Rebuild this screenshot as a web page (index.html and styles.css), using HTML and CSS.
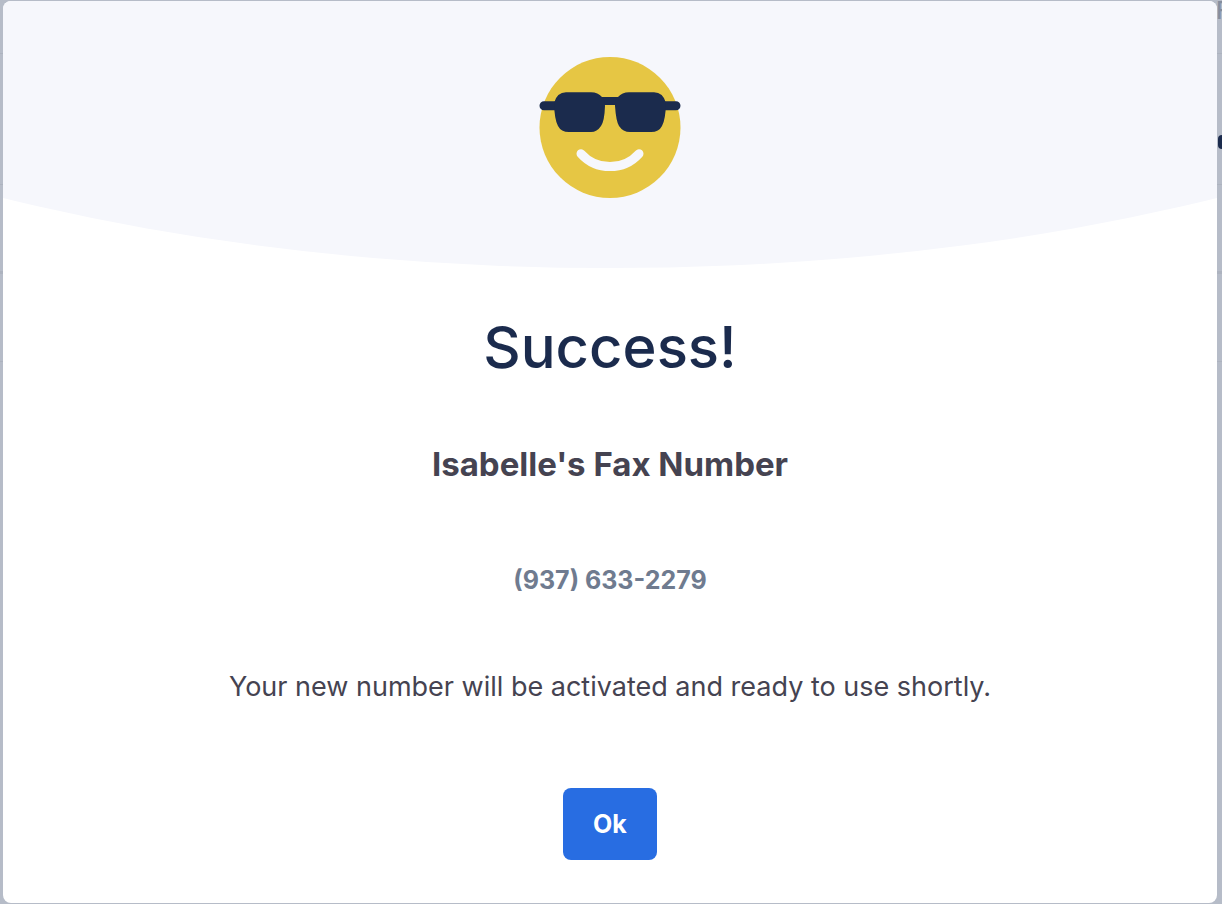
FILE: index.html
```html
<!DOCTYPE html>
<html lang="en">
<head>
    <meta charset="UTF-8">
    <meta name="viewport" content="width=device-width, initial-scale=1.0">
    <title>Success</title>
    <link rel="stylesheet" href="styles.css">
</head>
<body>
    <div class="page" aria-hidden="true">
        <div class="row row-title"><span>F</span></div>
        <div class="row row-status"><span class="dot"></span></div>
        <div class="row row-short"></div>
        <div class="row row-item"></div>
        <div class="row row-rest"></div>
    </div>
    <div class="modal" role="dialog" aria-modal="true" aria-labelledby="modalTitle">
        <div class="modal-header">
            <svg class="smiley" viewBox="0 0 142 142" role="img" aria-label="Smiling face with sunglasses">
                <circle cx="71" cy="70.5" r="70.5" fill="#e6c644"/>
                <path d="M42 96.700A39 39 0 0 0 100 96.700" fill="none" stroke="#f6f7fc" stroke-width="9" stroke-linecap="round"/>
                <path d="M5 48.700H24M118 48.700H137" fill="none" stroke="#1b2b4d" stroke-width="9" stroke-linecap="round"/>
                <path d="M58 40H84V48H58Z" fill="#1b2b4d"/>
                <path d="M27 35.300H52Q59 35.300 63 40Q66 43 66 49Q65.500 64 62 69Q58 75 52 75H30Q22 75 19 69Q15.500 63 15 46Q18 35.300 27 35.300Z" fill="#1b2b4d"/>
                <path d="M115 35.300H90Q83 35.300 79 40Q76 43 76 49Q77 64 80 69Q84 75 91 75H112Q120 75 123 69Q126.500 63 127 46Q124 35.300 115 35.300Z" fill="#1b2b4d"/>
            </svg>
        </div>
        <div class="modal-body">
            <h1 id="modalTitle">Success!</h1>
            <h2>Isabelle's Fax Number</h2>
            <p class="number">(937) 633-2279</p>
            <p class="message">Your new number will be activated and ready to use shortly.</p>
            <button type="button" class="ok">Ok</button>
        </div>
    </div>
</body>
</html>
```
FILE: styles.css
```css
* { box-sizing: border-box; }
body { margin: 0; display: grid; min-height: 100vh; overflow: hidden; font-family: Inter, "Liberation Sans", sans-serif; background-color: #b6bcc8; }

/* dimmed page behind the modal */
.page { grid-area: 1 / 1; display: flex; flex-direction: column; color: #858e9e; }
.row { display: flex; justify-content: flex-end; border-bottom: 1px solid #adb3bf; }
.row-title { height: 54px; font-size: 24px; line-height: 22px; font-weight: 500; }
.row-title span { width: 6px; }
.row-status { height: 131px; align-items: center; padding-top: 46px; }
.row-short { height: 89px; border-bottom-width: 3px; }
.row-item { height: 88px; }
.row-rest { flex: 1; border: 0; }
.dot { width: 4px; height: 14px; border-radius: 4px 0 0 4px; background-color: #1b2b4d; }

.modal { grid-area: 1 / 1; z-index: 1; margin: 1px 5px 1px 3px; border-radius: 8px; background-color: #fff; overflow: hidden; text-align: center; }
.modal-header { height: 267px; padding-top: 56px; background-color: #f6f7fc; clip-path: ellipse(100% 522px at 50% -255px); }
.smiley { display: block; width: 142px; height: 142px; margin: 0 auto; }

.modal-body { display: flex; flex-direction: column; align-items: center; padding: 43px 24px 40px; }
h1, h2, p { margin: 0; }
h1 { font-size: 58px; line-height: 72px; font-weight: 500; color: #1b2b4d; }
h2 { margin-top: 61px; font-size: 33px; line-height: 40px; font-weight: 700; color: #454351; }
.number { margin-top: 80px; font-size: 25px; line-height: 32px; font-weight: 700; color: #6f7b8f; }
.message { margin-top: 75px; font-size: 27px; line-height: 32px; color: #454351; }
.ok { margin-top: 85px; padding: 20px 30px; border: none; border-radius: 8px; background-color: #286de2; color: #fff; font-family: inherit; font-size: 25px; line-height: 32px; font-weight: 700; cursor: pointer; }
.ok:hover { background-color: #1f5fcb; }
```
